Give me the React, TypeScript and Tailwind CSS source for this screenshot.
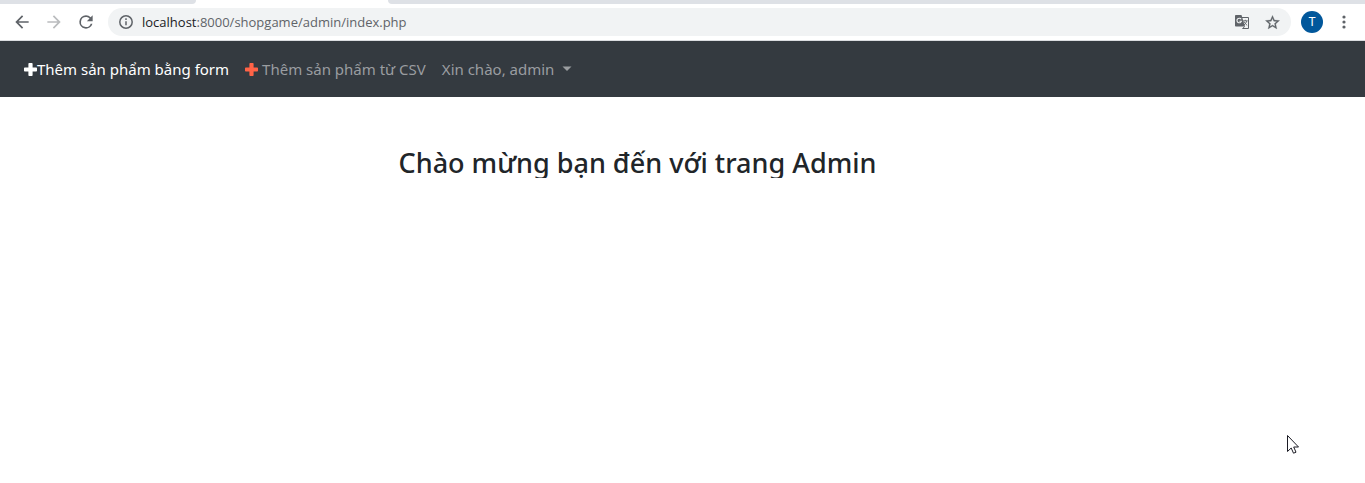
import React from "react";

function Plus({ className }: { className: string }) {
  return (
    <svg className={className} width="13" height="13" viewBox="0 0 13 13" fill="currentColor" aria-hidden="true">
      <path d="M5.2 0h2.6q.8 0 .8.8v3.6h3.6q.8 0 .8.8v2.6q0 .8-.8.8H8.6v3.6q0 .8-.8.8H5.2q-.8 0-.8-.8V8.600H.8Q0 8.600 0 7.800V5.200q0-.8.8-.8h3.600V.8q0-.8.8-.8z" />
    </svg>
  );
}

function BrowserBar() {
  return (
    <div className="font-['Open_Sans','Noto_Sans',sans-serif]">
      <div className="flex h-1 bg-white">
        <div className="w-49 rounded-br-[4px] bg-[#dee1e6]" />
        <div className="w-48" />
        <div className="flex-1 rounded-bl-[4px] bg-[#dee1e6]" />
      </div>
      <div className="flex h-[37px] items-center border-b border-[#dadce0] bg-white pr-3 pl-3">
        <button type="button" aria-label="Back" className="text-[#5f6368]">
          <svg width="20" height="20" viewBox="0 0 24 24" fill="currentColor">
            <path d="M20 11H7.830l5.590-5.590L12 4l-8 8 8 8 1.410-1.410L7.830 13H20v-2z" />
          </svg>
        </button>
        <button type="button" aria-label="Forward" className="ml-3 text-[#babcbe]">
          <svg width="20" height="20" viewBox="0 0 24 24" fill="currentColor">
            <path d="M12 4l-1.410 1.410L16.170 11H4v2h12.170l-5.580 5.590L12 20l8-8z" />
          </svg>
        </button>
        <button type="button" aria-label="Reload" className="ml-3 text-[#5f6368]">
          <svg width="20" height="20" viewBox="0 0 24 24" fill="currentColor">
            <path d="M17.650 6.350A7.960 7.960 0 0 0 12 4a8 8 0 1 0 7.730 10h-2.080A6 6 0 1 1 12 6c1.660 0 3.140.690 4.220 1.780L13 11h7V4l-2.350 2.350z" />
          </svg>
        </button>
        <div className="ml-3 flex h-7 flex-1 items-center rounded-full bg-[#f1f3f4] pr-2.5 pl-2.5">
          <button type="button" aria-label="Site information" className="text-[#5f6368]">
            <svg width="16" height="16" viewBox="0 0 16 16" fill="none" stroke="currentColor" strokeWidth="1.5">
              <circle cx="8" cy="8" r="6.200" />
              <path d="M8 7.200v4M8 4.300v1.600" />
            </svg>
          </button>
          <p className="ml-2 flex-1 text-[13px] leading-5 text-[#5f6368]">
            <span className="text-[#202124]">localhost</span>:8000/shopgame/admin/index.php
          </p>
          <button type="button" aria-label="Translate" className="mr-3.5 text-[#5f6368]">
            <svg width="16" height="16" viewBox="0 0 16 16">
              <path d="M7 3.500h7.500v11H8.500" fill="#f1f3f4" stroke="currentColor" />
              <path d="M1.800 1h5.700l3.500 11.500H1.800Q1 12.500 1 11.700V1.800Q1 1 1.800 1z" fill="currentColor" />
              <path d="M7.200 5.200a2.300 2.300 0 1 0 .300 2H5.400" fill="none" stroke="#f1f3f4" strokeWidth="1.100" />
              <path d="M9.200 6.800h4.500M11.300 5.800v1M12.800 7q-.6 2.400-2.800 4M10 7.500q1 2.200 3.200 3.900M8.500 14.500l2.300-2" fill="none" stroke="currentColor" strokeWidth=".9" />
            </svg>
          </button>
          <button type="button" aria-label="Bookmark this page" className="text-[#5f6368]">
            <svg width="17" height="17" viewBox="0 0 24 24" fill="currentColor" stroke="currentColor" strokeWidth=".4">
              <path d="M22 9.240l-7.190-.620L12 2 9.190 8.630 2 9.240l5.460 4.730L5.820 21 12 17.270 18.180 21l-1.630-7.030L22 9.240zM12 15.400l-3.760 2.270 1-4.280-3.320-2.880 4.380-.380L12 6.100l1.710 4.040 4.380.380-3.320 2.880 1 4.280L12 15.400z" />
            </svg>
          </button>
        </div>
        <button type="button" aria-label="Profile" className="ml-2.5 flex size-[22px] items-center justify-center rounded-full bg-[#01579b] font-['Roboto',sans-serif] text-xs text-white">
          T
        </button>
        <button type="button" aria-label="Menu" className="ml-3 text-[#5f6368]">
          <svg width="18" height="18" viewBox="0 0 18 18" fill="currentColor">
            <circle cx="9" cy="4" r="1.600" />
            <circle cx="9" cy="9" r="1.600" />
            <circle cx="9" cy="14" r="1.600" />
          </svg>
        </button>
      </div>
    </div>
  );
}

export default function App() {
  return (
    <div className="min-h-screen bg-white font-['Noto_Sans','Open_Sans',sans-serif] text-[#212529]">
      <BrowserBar />
      <nav className="flex h-14 items-center gap-4 bg-[#343a40] px-6 text-[15px] leading-6 text-[#9a9da0]">
        <a href="#form" className="flex items-center text-white">
          <Plus className="text-white" />
          Thêm sản phẩm bằng form
        </a>
        <a href="#csv" className="flex items-center gap-1">
          <Plus className="text-[#ff6347]" />
          Thêm sản phẩm từ CSV
        </a>
        <button type="button" aria-haspopup="menu" className="flex items-center gap-2">
          Xin chào, admin
          <svg width="10" height="7" viewBox="0 0 10 7" fill="currentColor" aria-hidden="true">
            <path d="M.5.500h9L5 5z" />
          </svg>
        </button>
      </nav>
      <main className="flex pt-12">
        <h1 className="ml-[29.2%] h-[33px] overflow-hidden text-[27px] leading-9 font-medium whitespace-nowrap">
          Chào mừng bạn đến với trang Admin
        </h1>
      </main>
      <svg className="absolute top-[434px] left-[1286px]" width="14" height="21" viewBox="0 0 14 21" aria-hidden="true">
        <path d="M1.500 1.500v16l3.700-3.500 2.300 5.200 2.500-1-2.300-5.200h4.800z" fill="#fff" stroke="#1b1b24" />
      </svg>
    </div>
  );
}
